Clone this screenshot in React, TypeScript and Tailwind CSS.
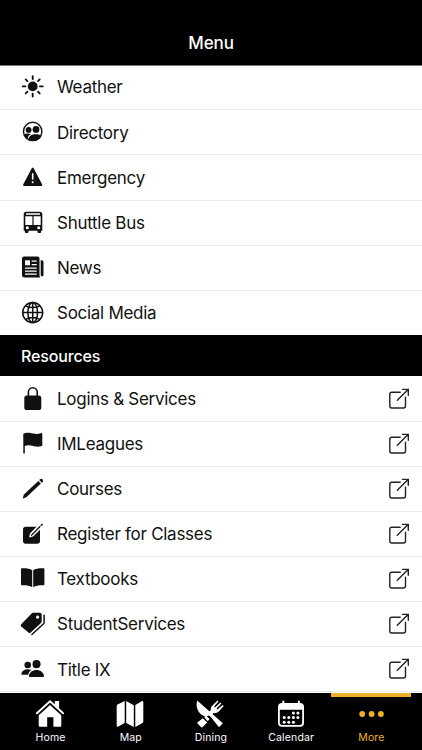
import type { ReactNode } from 'react'

function Glyph({ children }: { children: ReactNode }) {
  return (
    <svg viewBox="0 0 24 24" fill="currentColor" className="h-6 w-6 shrink-0 overflow-visible" aria-hidden="true">
      {children}
    </svg>
  )
}

function SunIcon() {
  return (
    <Glyph>
      <circle cx="11.7" cy="11.4" r="4.9" />
      <path
        d="M11.7 1.3v2.7M11.7 18.8v2.7M1.7 11.4h2.7M19 11.4h2.7M4.7 4.4l1.7 1.7M17 16.7l1.7 1.7M4.7 18.4l1.7-1.7M17 6.1l1.7-1.7"
        stroke="currentColor"
        strokeWidth="1.9"
        strokeLinecap="round"
      />
    </Glyph>
  )
}

function DirectoryIcon() {
  return (
    <Glyph>
      <circle cx="11.7" cy="11.4" r="9.2" fill="none" stroke="currentColor" strokeWidth="1.4" />
      <circle cx="7.6" cy="9.9" r="2.9" />
      <circle cx="15" cy="9.4" r="3.4" />
      <path d="M2.6 14.9c2-1.5 4.5-1.9 7.4-.9-1.7.8-2.8 2-3.2 4.3l-.5.7c-1.8-.9-3-2.3-3.7-4.1ZM7.5 19.6c.3-3.6 3.2-5.4 7.2-5.4 2.5 0 4.6.5 6 1.5-1.4 3.1-4.7 5.4-9 5.400-1.6 0-3-.6-4.2-1.500Z" />
    </Glyph>
  )
}

function WarningIcon() {
  return (
    <Glyph>
      <path d="M10.9 3.1q.8-1.2 1.6 0L21.2 19.500q.5 1.4-.9 1.5H3.1q-1.4-.1-.9-1.5Z" />
      <path d="M11.7 8.9v5.2" stroke="white" strokeWidth="1.6" strokeLinecap="round" />
      <circle cx="11.7" cy="17.2" r="1" fill="white" />
    </Glyph>
  )
}

function BusIcon() {
  return (
    <Glyph>
      <path
        fillRule="evenodd"
        d="M5.2.7h13.6a2.5 2.5 0 0 1 2.5 2.5v16.5h-1.2v1.2q0 1-1 1h-1.6q-1 0-1-1v-1.2h-9v1.2q0 1-1 1H4.9q-1 0-1-1v-1.2H2.7V3.2A2.5 2.5 0 0 1 5.2.7ZM4.3 5.2v8.7h7.1V5.2Zm8.3 0v8.7h7.1V5.2ZM5 2.3v1.5h14V2.3Z"
      />
      <circle cx="6.3" cy="16.8" r="1.5" fill="white" />
      <circle cx="17.7" cy="16.8" r="1.5" fill="white" />
    </Glyph>
  )
}

function NewsIcon() {
  return (
    <Glyph>
      <path d="M3 .5h13.500a2 2 0 0 1 2 2v16.800q0 1.600 1 2.300h-16A2.500 2.500 0 0 1 1 19.100V2.500a2 2 0 0 1 2-2ZM19.700 4.300h1.100a1.700 1.700 0 0 1 1.700 1.700v13.100a1.400 1.400 0 0 1-2.800 0Z" />
      <path d="M4 4.300h5v5H4Z" fill="white" />
      <path d="M10.700 5.100h5M10.700 8.600h5M4 12h11.700M4 15.100h11.700M4 18.100h11.700" stroke="white" strokeWidth="1.25" />
    </Glyph>
  )
}

function GlobeIcon() {
  return (
    <Glyph>
      <g fill="none" stroke="currentColor" strokeWidth="1.5">
        <circle cx="11.7" cy="11.6" r="10" />
        <ellipse cx="11.7" cy="11.6" rx="4.8" ry="10" />
        <path d="M1.7 11.6h20M11.7 1.6v20M4.7 4.8c4 2.4 10 2.4 14 0M4.7 18.4c4-2.4 10-2.4 14 0" />
      </g>
    </Glyph>
  )
}

function LockIcon() {
  return (
    <Glyph>
      <rect x="3.3" y="8.4" width="17" height="14.6" rx="2.6" />
      <path d="M7.4 9.3V5.1a4.4 4.4 0 0 1 8.8 0v4.2" fill="none" stroke="currentColor" strokeWidth="1.6" />
    </Glyph>
  )
}

function FlagIcon() {
  return (
    <Glyph>
      <path d="M2.3 1.7C4 .7 6 .5 8.2.8c3.4.5 5.5 1.5 8.3 1.2 1.7-.1 2.9-.6 4-.9q.8-.1.8.7v11.4q0 .6-.6.8c-1.6.6-3.6.9-5.7.6-2.6-.4-4.8-1.4-7.6-1.3-1.3 0-2.5.2-3.600.6v7.2q0 .7-.75.7t-.75-.7Z" />
    </Glyph>
  )
}

function PencilIcon() {
  return (
    <Glyph>
      <path d="M17.3 3.9l2.6 2.6L5.6 19.9l-3.1 1.6q-.8.2-.6-.7l1-3.2Z" />
      <path d="M18.2 3.1l.9-.8a1.85 1.85 0 0 1 2.6 2.6l-.8.9Z" />
    </Glyph>
  )
}

function ComposeIcon() {
  return (
    <Glyph>
      <path d="M4.8 4.8h10.7l-6.5 6.7-.9 4 4-.9L19 7.8v11.2a2.8 2.8 0 0 1-2.8 2.8H4.8A2.8 2.8 0 0 1 2 19V7.6a2.8 2.8 0 0 1 2.8-2.8Z" />
      <path d="M10.5 13.3l8.3-8.6" stroke="currentColor" strokeWidth="1.3" strokeLinecap="round" />
      <path d="M20.3 3.3l.8-.8" stroke="currentColor" strokeWidth="1.6" strokeLinecap="round" />
    </Glyph>
  )
}

function BookIcon() {
  return (
    <Glyph>
      <path d="M.8 1.2C5 1.1 9 1.4 11.2 3.2v17C8.8 18.5 5 18.2.8 18.3q-.8 0-.8-.8V2q0-.8.8-.8ZM22.6 1.2C18.4 1.1 14.4 1.4 12.2 3.2v17c2.4-1.7 6.2-2 10.4-1.9q.8 0 .8-.8V2q0-.8-.8-.8Z" />
    </Glyph>
  )
}

function TagsIcon() {
  return (
    <Glyph>
      <path
        fillRule="evenodd"
        d="M12.1.8h7a1.6 1.6 0 0 1 1.6 1.6v7q0 .9-.7 1.6L9.7 20.5q-1.1 1-2.2 0L.2 14.4q-1.1-1.1 0-2.2L10.6 1.4q.6-.6 1.5-.6ZM16.6 3.6a1.6 1.6 0 1 0 .01 0Z"
      />
      <path d="M23.1 3.3v7.2q0 .7-.5 1.2L10.9 22.5" fill="none" stroke="currentColor" strokeWidth="1.5" strokeLinecap="round" />
    </Glyph>
  )
}

function PeopleIcon() {
  return (
    <Glyph>
      <circle cx="6.7" cy="8" r="3.3" />
      <ellipse cx="15.5" cy="7.2" rx="4" ry="4.1" />
      <path d="M.9 17.7q-.7 0-.6-.8c.5-3 3-4.7 6.4-4.7 1.5 0 2.8.3 3.9.9-2 1-3 2.5-3.4 4.6ZM8.8 19.9q-1 0-.9-1c.6-3.6 3.6-5.8 7.6-5.8s6.9 2.2 7.5 5.8q.1 1-.9 1Z" />
    </Glyph>
  )
}

function ExternalIcon() {
  return (
    <svg viewBox="0 0 24 24" fill="none" stroke="#222" strokeWidth="1.4" className="h-6 w-6 shrink-0" aria-hidden="true">
      <path d="M12.2 5.2H3.8a2 2 0 0 0-2 2V19a2 2 0 0 0 2 2h11.7a2 2 0 0 0 2-2v-8.7" strokeLinecap="round" />
      <path d="M9.3 13.2L20.1 2.600M14.500 2.400h5.800v5.800" strokeLinecap="round" />
    </svg>
  )
}

function NavGlyph({ children }: { children: ReactNode }) {
  return (
    <svg viewBox="0 0 28 28" fill="currentColor" className="-ml-px h-7 w-7 overflow-visible" aria-hidden="true">
      {children}
    </svg>
  )
}

function HomeIcon() {
  return (
    <NavGlyph>
      <path d="M14 5l11.3 10.3v10.2q0 1.3-1.3 1.3h-6.6v-9.5h-6.2v9.5H4q-1.3 0-1.3-1.3V15.3Z" />
      <path d="M.9 13.3L14 1.3l13.1 12" fill="none" stroke="black" strokeWidth="3.8" />
      <path d="M.9 13.3L14 1.3l13.1 12" fill="none" stroke="currentColor" strokeWidth="1.9" strokeLinecap="round" strokeLinejoin="round" />
      <path d="M18.8 1.1h4.3v7.3l-4.3-3.9Z" />
    </NavGlyph>
  )
}

function MapIcon() {
  return (
    <NavGlyph>
      <path d="M8.7 1.1v21.8l-6.3 3.6q-1.7.8-1.7-1V6.1q0-1 .8-1.5ZM10.2 1l7.6 4.2v21.7l-7.6-4ZM19.3 5l6.3-3.7q1.7-.8 1.7 1v19.3q0 1-.8 1.5l-7.2 3.9Z" />
    </NavGlyph>
  )
}

function DiningIcon() {
  return (
    <NavGlyph>
      <path d="M1.2.6C.2 4 .3 8.5 3.3 12.6c2 2.7 4.2 3.7 6.5 3.8l3.7-1L23 27.2l3.8-3.9Z" />
      <path d="M21.5.5l1 .9-4.4 5.2.9.9 5.4-5.1 1.1 1-5 5.2.9.9 5.3-4.5 1 .9-4.9 5.6c-1.8 1.6-3.6 1.8-5.2 1.6l-3.4 3.1-2.8-2.6 3.4-3.5c-.1-2 .3-3.3 1.7-4.7Z" />
      <path d="M6.8 18.2l4.4 4.3-4.8 4.7q-.8.4-1.4-.1l-3.5-3.6q-.4-.7.1-1.3ZM8 17.1l2.2-1.3 3.4 3.3-1.9 2.1Z" />
    </NavGlyph>
  )
}

function CalendarIcon() {
  const dots = [
    [16.4, 12.9], [20.9, 12.9],
    [7.2, 17.6], [11.8, 17.6], [16.4, 17.6], [20.9, 17.6],
    [7.2, 22.2], [11.8, 22.2], [16.4, 22.2],
  ]
  return (
    <NavGlyph>
      <path
        fillRule="evenodd"
        d="M5.3 3V1.6a1 1 0 0 1 2 0V3h13.5V1.6a1 1 0 0 1 2 0V3h.2a4 4 0 0 1 4 4v15.8a4 4 0 0 1-4 4H5a4 4 0 0 1-4-4V7a4 4 0 0 1 4-4ZM2.8 9.8v13a2.3 2.3 0 0 0 2.3 2.3h17.8a2.3 2.3 0 0 0 2.3-2.3v-13Z"
      />
      {dots.map(([x, y]) => (
        <circle key={`${x}-${y}`} cx={x} cy={y} r="1.5" />
      ))}
    </NavGlyph>
  )
}

function MoreIcon() {
  return (
    <NavGlyph>
      <circle cx="5.2" cy="14" r="2.9" />
      <circle cx="14.6" cy="14" r="2.9" />
      <circle cx="23.9" cy="14" r="2.9" />
    </NavGlyph>
  )
}

const menuItems = [
  { label: 'Weather', icon: <SunIcon /> },
  { label: 'Directory', icon: <DirectoryIcon /> },
  { label: 'Emergency', icon: <WarningIcon /> },
  { label: 'Shuttle Bus', icon: <BusIcon /> },
  { label: 'News', icon: <NewsIcon /> },
  { label: 'Social Media', icon: <GlobeIcon /> },
]

const resourceItems = [
  { label: 'Logins & Services', icon: <LockIcon /> },
  { label: 'IMLeagues', icon: <FlagIcon /> },
  { label: 'Courses', icon: <PencilIcon /> },
  { label: 'Register for Classes', icon: <ComposeIcon /> },
  { label: 'Textbooks', icon: <BookIcon /> },
  { label: 'StudentServices', icon: <TagsIcon /> },
  { label: 'Title IX', icon: <PeopleIcon /> },
]

const tabs = [
  { label: 'Home', icon: <HomeIcon /> },
  { label: 'Map', icon: <MapIcon /> },
  { label: 'Dining', icon: <DiningIcon /> },
  { label: 'Calendar', icon: <CalendarIcon /> },
  { label: 'More', icon: <MoreIcon />, active: true },
]

function Row({ label, icon, external }: { label: string; icon: ReactNode; external?: boolean }) {
  return (
    <li className="flex h-[45.15px] items-center border-b border-[#e9e9e9] pl-[21px] pr-[10px] text-[#111]">
      {icon}
      <span className="ml-3 flex-1 pt-[0.5px] text-[17px] leading-6 tracking-[-0.28px]">{label}</span>
      {external && <ExternalIcon />}
    </li>
  )
}

export default function App() {
  return (
    <div className="flex h-[750px] w-[422px] flex-col overflow-hidden bg-white font-['Inter',sans-serif]">
      <header className="flex h-[66px] shrink-0 items-end justify-center border-b border-[#777] bg-black pb-[10px] text-white">
        <h1 className="text-[17px] font-medium leading-6 tracking-[-0.1px]">Menu</h1>
      </header>

      <main className="h-[627px] shrink-0 overflow-hidden">
        <ul className="-mt-[0.9px]">
          {menuItems.map((item) => (
            <Row key={item.label} {...item} />
          ))}
        </ul>
        <h2 className="-mt-[0.5px] flex h-[41px] items-center bg-black pl-[21px] text-base font-medium tracking-[-0.15px] text-white">
          Resources
        </h2>
        <ul>
          {resourceItems.map((item) => (
            <Row key={item.label} {...item} external />
          ))}
        </ul>
      </main>

      <nav className="grid flex-1 grid-cols-5 bg-black px-[10.5px]">
        {tabs.map((tab) => (
          <div
            key={tab.label}
            className={`flex flex-col items-center border-t-4 pt-[3px] ${
              tab.active ? 'border-[#eeb028] text-[#eeb028]' : 'border-transparent text-white'
            }`}
          >
            {tab.icon}
            <span className="mt-[2px] text-[10.5px] leading-4 tracking-[0.15px]">{tab.label}</span>
          </div>
        ))}
      </nav>
    </div>
  )
}
